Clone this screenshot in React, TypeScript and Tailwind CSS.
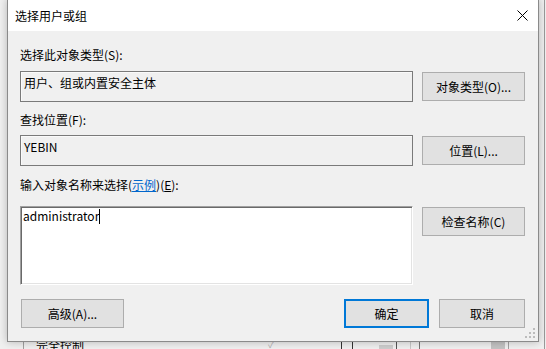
import React from "react";

const font = { fontFamily: '"Noto Sans CJK SC", "Noto Sans", sans-serif' };

function DlgButton({ children, primary = false }: { children: React.ReactNode; primary?: boolean }) {
  return (
    <button
      className={
        primary
          ? "w-full h-[29px] bg-[#e1e1e1] border-2 border-[#0078d7] text-[12px] text-black flex items-center justify-center"
          : "w-full h-[29px] bg-[#e1e1e1] border border-[#adadad] text-[12px] text-black flex items-center justify-center"
      }
    >
      {children}
    </button>
  );
}

function SizeGrip() {
  return (
    <svg width="10" height="10" viewBox="0 0 10 10" className="block">
      <rect x="8" y="0" width="2" height="2" fill="#bcbcbc" />
      <rect x="4" y="4" width="2" height="2" fill="#bcbcbc" />
      <rect x="8" y="4" width="2" height="2" fill="#bcbcbc" />
      <rect x="0" y="8" width="2" height="2" fill="#bcbcbc" />
      <rect x="4" y="8" width="2" height="2" fill="#bcbcbc" />
      <rect x="8" y="8" width="2" height="2" fill="#bcbcbc" />
    </svg>
  );
}

export default function App() {
  return (
    <div className="relative w-[546px] h-[349px] overflow-hidden bg-[#f0f0f0]" style={font}>
      {/* window behind the dialog */}
      <div className="absolute left-[23px] top-[300px] w-px h-[49px] bg-[#a0a0a0]" />
      <div className="absolute left-[36px] top-[337px] text-[12px] leading-[16px] text-black">完全控制</div>
      <div className="absolute left-[268px] top-[336px] text-[10px] text-[#b0b0b0]">✓</div>
      <div className="absolute left-[341px] top-[300px] w-px h-[49px] bg-[#333]" />
      <div className="absolute left-[352px] top-[300px] w-px h-[49px] bg-[#333]" />
      <div className="absolute left-[379px] top-[345px] w-[14px] h-[4px] bg-[#cdcdcd]" />
      <div className="absolute left-[396px] top-[300px] w-px h-[49px] bg-[#555]" />
      <div className="absolute left-[410px] top-[300px] w-px h-[49px] bg-[#c8c8c8]" />
      <div className="absolute left-[419px] top-[300px] w-px h-[49px] bg-[#777]" />
      <div className="absolute left-[491px] top-[341px] w-[14px] h-[8px] bg-[#c3c3c3]" />
      <div className="absolute left-[508px] top-[300px] w-px h-[49px] bg-[#a0a0a0]" />
      <div className="absolute left-[544px] top-0 w-px h-[349px] bg-[#9a9a9a]" />

      {/* dialog */}
      <div className="absolute left-[7px] top-[-1px] w-[532px] h-[343px] border border-[#8a8a8a] bg-[#f0f0f0] flex flex-col shadow-[0_0_8px_rgba(0,0,0,0.25)]">
        <div className="h-[31px] shrink-0 bg-white flex items-center justify-between pl-[7px] pr-[10px]">
          <span className="text-[12px] text-black">选择用户或组</span>
          <svg width="11" height="11" viewBox="0 0 11 11" className="block">
            <path d="M0.5 0.5 L10.5 10.5 M10.5 0.5 L0.5 10.5" stroke="#000" strokeWidth="1" />
          </svg>
        </div>

        <div className="relative flex-1 flex flex-col pl-[12px] pr-[13px] pt-[16px]">
          <div className="h-[16px] leading-[16px] text-[12px] text-black">选择此对象类型(S):</div>
          <div className="mt-[8px] flex items-center gap-[9px]">
            <div className="w-[393px] h-[31px] border border-[#7a7a7a] shadow-[inset_1px_1px_0_#fafafa] bg-[#f0f0f0] pl-[3px] pt-[3px] text-[12px] leading-[16px] text-black">
              用户、组或内置安全主体
            </div>
            <div className="w-[103px]">
              <DlgButton>对象类型(O)...</DlgButton>
            </div>
          </div>

          <div className="mt-[10px] h-[16px] leading-[16px] text-[12px] text-black">查找位置(F):</div>
          <div className="mt-[7px] flex items-center gap-[9px]">
            <div className="w-[393px] h-[31px] border border-[#7a7a7a] shadow-[inset_1px_1px_0_#fafafa] bg-[#f0f0f0] pl-[3px] pt-[3px] text-[12px] leading-[16px] text-black">
              YEBIN
            </div>
            <div className="w-[103px]">
              <DlgButton>位置(L)...</DlgButton>
            </div>
          </div>

          <div className="mt-[11px] h-[16px] leading-[16px] text-[12px] text-black">
            输入对象名称来选择(<span className="text-[#0066cc] underline">示例</span>)(<span className="underline">E</span>):
          </div>
          <div className="mt-[13px] flex items-start gap-[9px]">
            <div className="w-[393px] h-[79px] bg-white border border-t-[#a0a0a0] border-l-[#a0a0a0] border-b-white border-r-white shadow-[inset_1px_1px_0_#696969,inset_-1px_-1px_0_#e3e3e3] pl-[2px] pt-[1px] text-[12px] leading-[16px] text-black flex items-start">
              <span>administrator</span>
              <span className="inline-block w-px h-[15px] bg-black mt-[1px]" />
            </div>
            <div className="w-[103px] mt-[1px]">
              <DlgButton>检查名称(C)</DlgButton>
            </div>
          </div>

          <div className="mt-[14px] flex items-center">
            <div className="w-[103px] ml-[1px]">
              <DlgButton>高级(A)...</DlgButton>
            </div>
            <div className="flex-1" />
            <div className="w-[85px]">
              <DlgButton primary>确定</DlgButton>
            </div>
            <div className="w-[86px] ml-[10px]">
              <DlgButton>取消</DlgButton>
            </div>
          </div>

          <div className="absolute right-[3px] bottom-[3px]">
            <SizeGrip />
          </div>
        </div>
      </div>
    </div>
  );
}
